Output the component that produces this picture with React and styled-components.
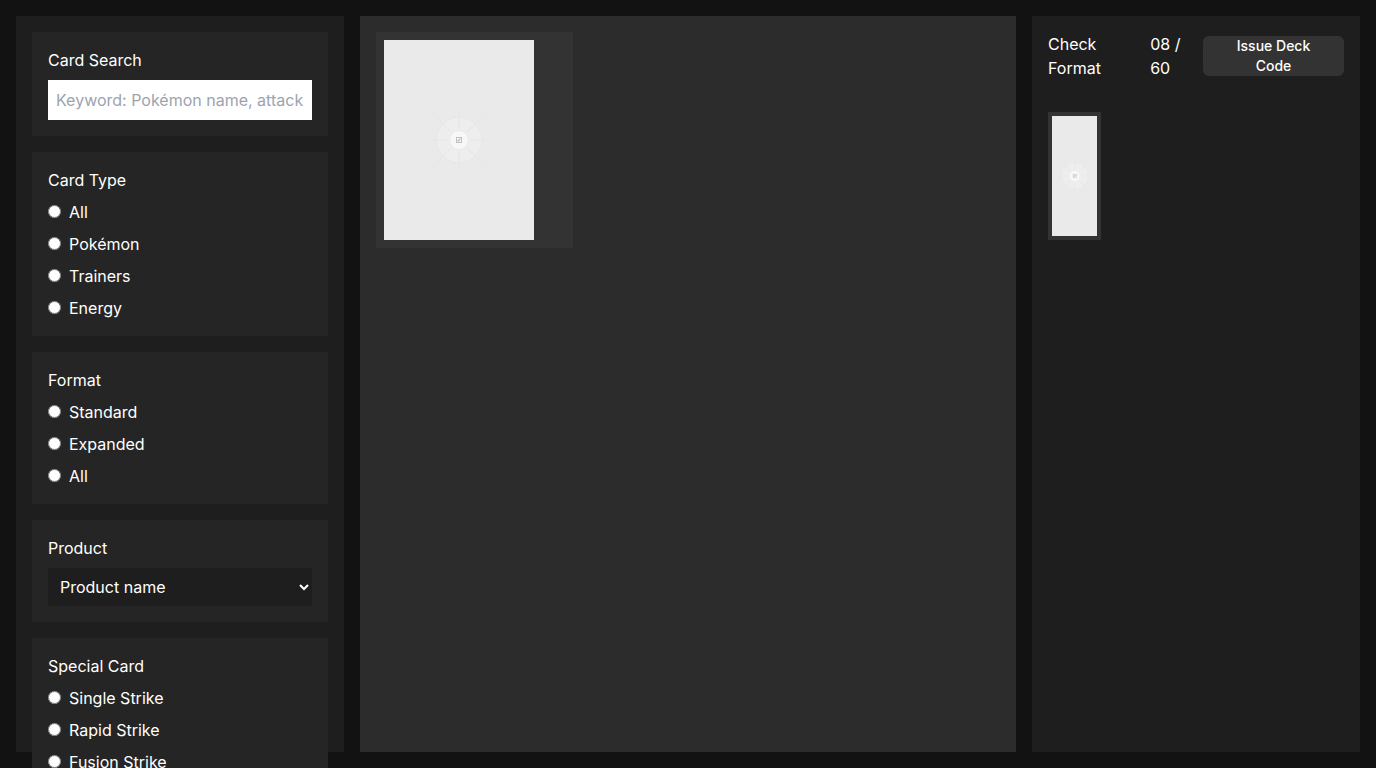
import React from 'react';
import styled, { createGlobalStyle } from 'styled-components';

const GlobalStyle = createGlobalStyle`
  *, *::before, *::after { box-sizing: border-box; }
  body {
    margin: 0;
    background: #121212;
    color: #fff;
    font-family: Inter, "Liberation Sans", sans-serif;
    font-size: 16px;
    line-height: 24px;
  }
`;

const Layout = styled.div`
  display: grid;
  grid-template-columns: 1fr 2fr 1fr;
  gap: 16px;
  height: 100vh;
  padding: 16px;
`;

const Panel = styled.div`
  min-width: 0;
  min-height: 0;
  padding: 16px;
  background: ${({ $light }) => ($light ? '#2c2c2c' : '#1e1e1e')};
`;

const Section = styled.section`
  margin: 0 0 16px;
  padding: 16px;
  background: #252525;
`;

const SectionTitle = styled.h2`
  display: block;
  margin: 0 0 8px;
  font-size: 16px;
  font-weight: 400;
  line-height: 24px;
`;

const SearchInput = styled.input`
  display: block;
  width: 100%;
  height: 40px;
  padding: 8px;
  border: 0;
  border-radius: 0;
  background: #fff;
  color: #121212;
  font: inherit;

  &::placeholder {
    color: #9ca3af;
    opacity: 1;
  }
`;

const RadioList = styled.div`
  display: grid;
  gap: 8px;
`;

const RadioLabel = styled.label`
  display: flex;
  align-items: baseline;
  gap: 8px;
`;

const Radio = styled.input`
  width: 13px;
  height: 13px;
  margin: 0;
`;

const ProductSelect = styled.select`
  display: block;
  width: 100%;
  height: 38px;
  padding: 8px;
  border: 0;
  border-radius: 0;
  background: #1e1e1e;
  color: #fff;
  font: inherit;
`;

const CardGrid = styled.div`
  display: grid;
  grid-template-columns: repeat(3, 1fr);
  gap: 16px;
`;

const DeckGrid = styled.div`
  display: grid;
  grid-template-columns: repeat(5, 1fr);
  gap: 8px;
`;

const CardTile = styled.div`
  padding: ${({ $compact }) => ($compact ? '4px' : '8px')};
  background: #333;
`;

const CardImage = styled.svg`
  display: block;
  width: ${({ $compact }) => ($compact ? '100%' : '150px')};
  max-width: 100%;
  height: ${({ $compact }) => ($compact ? '120px' : '200px')};
  background: #eaeaea;
`;

const DeckHeader = styled.header`
  display: flex;
  align-items: center;
  justify-content: space-between;
  margin-bottom: 32px;
`;

const IssueButton = styled.button`
  height: 40px;
  padding: 0 16px;
  border: 0;
  border-radius: 6px;
  background: #333;
  color: #fff;
  font: inherit;
  font-size: 14px;
  font-weight: 500;
  line-height: 20px;
  cursor: pointer;
`;

const spokes = [0, 45, 90, 135, 180, 225, 270, 315];

function Placeholder({ compact }) {
  return (
    <CardImage
      $compact={compact}
      viewBox={compact ? '37 0 75 200' : '0 0 150 200'}
      preserveAspectRatio="xMidYMid meet"
      role="img"
      aria-label="Card"
    >
      <circle cx="75" cy="100" r="22" fill="#eeeeee" />
      <circle cx="75" cy="100" r="23" fill="none" stroke="#e8e8e8" />
      {spokes.map((angle) => (
        <path
          key={angle}
          d={angle % 90 === 0 ? 'M86 100H98' : 'M86 100H98'}
          stroke="#e8e8e8"
          strokeWidth="1.6"
          transform={`rotate(${angle} 75 100)`}
        />
      ))}
      {spokes.map((angle) => (
        <path
          key={angle}
          d={angle % 90 === 0 ? 'M98 100H103' : 'M98 100H113'}
          stroke="#e6e6e6"
          transform={`rotate(${angle} 75 100)`}
        />
      ))}
      <circle cx="75" cy="100" r="9.5" fill="#f7f7f7" stroke="#e9e9e9" />
      <g fill="none" stroke="#b8b8b8" strokeWidth="0.8">
        <rect x="72.4" y="97.4" width="5.2" height="5.2" />
        <path d="M72.5 100.5H75V99H77.5M75 100.5V102" />
      </g>
    </CardImage>
  );
}

function RadioSection({ title, name, options }) {
  return (
    <Section role="radiogroup" aria-label={title}>
      <SectionTitle>{title}</SectionTitle>
      <RadioList>
        {options.map((option) => (
          <RadioLabel key={option}>
            <Radio type="radio" name={name} value={option} />
            {option}
          </RadioLabel>
        ))}
      </RadioList>
    </Section>
  );
}

export default function App() {
  return (
    <>
      <GlobalStyle />
      <Layout>
        <Panel as="aside">
          <Section>
            <SectionTitle as="label" htmlFor="keyword">
              Card Search
            </SectionTitle>
            <SearchInput id="keyword" type="text" placeholder="Keyword: Pokémon name, attack" />
          </Section>
          <RadioSection title="Card Type" name="type" options={['All', 'Pokémon', 'Trainers', 'Energy']} />
          <RadioSection title="Format" name="format" options={['Standard', 'Expanded', 'All']} />
          <Section>
            <SectionTitle as="label" htmlFor="product">
              Product
            </SectionTitle>
            <ProductSelect id="product">
              <option>Product name</option>
            </ProductSelect>
          </Section>
          <RadioSection
            title="Special Card"
            name="special"
            options={['Single Strike', 'Rapid Strike', 'Fusion Strike']}
          />
        </Panel>
        <Panel as="main" $light>
          <CardGrid>
            <CardTile>
              <Placeholder />
            </CardTile>
          </CardGrid>
        </Panel>
        <Panel as="aside">
          <DeckHeader>
            <span>Check Format</span>
            <span>08 / 60</span>
            <IssueButton type="button">Issue Deck Code</IssueButton>
          </DeckHeader>
          <DeckGrid>
            <CardTile $compact>
              <Placeholder compact />
            </CardTile>
          </DeckGrid>
        </Panel>
      </Layout>
    </>
  );
}
